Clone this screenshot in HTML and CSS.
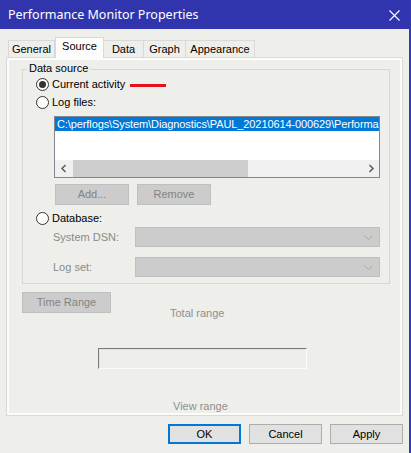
FILE: index.html
```html
<!DOCTYPE html>
<html>
<head>
<meta charset="utf-8">
<link rel="stylesheet" href="styles.css">
</head>
<body>
<div class="window">
  <div class="titlebar">
    <span class="title">Performance Monitor Properties</span>
    <svg class="close" width="11" height="11" viewBox="0 0 11 11"><path d="M0.5 0.5 L10.5 10.5 M10.5 0.5 L0.5 10.5" stroke="#fff" stroke-width="1.1" fill="none"/></svg>
  </div>
  <div class="body">
    <div class="tabs">
      <div class="tab t-general">General</div>
      <div class="tab t-source active">Source</div>
      <div class="tab t-data">Data</div>
      <div class="tab t-graph">Graph</div>
      <div class="tab t-appearance">Appearance</div>
    </div>
    <div class="panel">
      <div class="panel-inner">
        <div class="group">
          <span class="legend">Data source</span>
          <div class="radio-row first">
            <span class="radio checked"></span>
            <span class="rlabel">Current activity</span>
            <span class="redline"></span>
          </div>
          <div class="radio-row second">
            <span class="radio"></span>
            <span class="rlabel">Log files:</span>
          </div>
          <div class="listbox">
            <div class="item">C:\perflogs\System\Diagnostics\PAUL_20210614-000629\Performa</div>
            <div class="hscroll">
              <div class="arrow"><svg width="8" height="9" viewBox="0 0 8 9"><path d="M5.5 1 L2 4.5 L5.5 8" stroke="#606060" stroke-width="1.6" fill="none"/></svg></div>
              <div class="thumb"></div>
              <div class="track"></div>
              <div class="arrow"><svg width="8" height="9" viewBox="0 0 8 9"><path d="M2.5 1 L6 4.5 L2.5 8" stroke="#606060" stroke-width="1.6" fill="none"/></svg></div>
            </div>
          </div>
          <div class="btn-row">
            <div class="btn disabled small">Add...</div>
            <div class="btn disabled small">Remove</div>
          </div>
          <div class="radio-row third">
            <span class="radio"></span>
            <span class="rlabel">Database:</span>
          </div>
          <div class="field-row dsn">
            <span class="flabel">System DSN:</span>
            <div class="combo"><svg width="9" height="5" viewBox="0 0 9 5"><path d="M0.5 0.5 L4.5 4.5 L8.5 0.5" stroke="#a8a8a8" stroke-width="1" fill="none"/></svg></div>
          </div>
          <div class="field-row logset">
            <span class="flabel">Log set:</span>
            <div class="combo"><svg width="9" height="5" viewBox="0 0 9 5"><path d="M0.5 0.5 L4.5 4.5 L8.5 0.5" stroke="#a8a8a8" stroke-width="1" fill="none"/></svg></div>
          </div>
        </div>
        <div class="range-row">
          <div class="btn disabled timerange">Time Range</div>
          <span class="total-label">Total range</span>
        </div>
        <div class="slider"></div>
        <div class="view-label">View range</div>
      </div>
    </div>
    <div class="dialog-buttons">
      <div class="btn dlg default">OK</div>
      <div class="btn dlg">Cancel</div>
      <div class="btn dlg">Apply</div>
    </div>
  </div>
</div>
</body>
</html>
```
FILE: styles.css
```css
* { box-sizing: border-box; }
html, body { margin: 0; padding: 0; }
body {
  background: #eeeeea;
  font-family: "Liberation Sans", Arial, sans-serif;
  font-size: 11px;
  line-height: 13px;
  color: #000;
}
.window {
  width: 411px;
  height: 453px;
  border-right: 2px solid #3338b3;
  background: #eeeeea;
  overflow: hidden;
}
.titlebar {
  height: 29px;
  background: #3135ad;
  display: flex;
  align-items: center;
  padding-left: 8px;
  padding-right: 8px;
}
.title {
  font-family: "Noto Sans", "Open Sans", sans-serif;
  font-size: 12.5px;
  color: #fff;
  flex: 1;
  line-height: 16px;
  padding-top: 1px;
}
.close { margin-top: 1px; margin-right: 1px; }
.body { padding-top: 8px; }
.tabs {
  display: flex;
  align-items: flex-end;
  height: 21px;
  margin-left: 8px;
  margin-bottom: -1px;
}
.tab {
  height: 17px;
  margin-bottom: 1px;
  border: 1px solid #d9d9d9;
  border-bottom: none;
  background: #eeeeea;
  text-align: center;
  padding-top: 2px;
  white-space: nowrap;
}
.t-general { width: 47px; }
.t-source { width: 49px; }
.t-data { width: 40px; border-left: none; }
.t-graph { width: 42px; border-left: none; }
.t-appearance { width: 69px; border-left: none; }
.tab.active {
  height: 21px;
  margin-bottom: 0;
  background: #fcfcfb;
  position: relative;
  z-index: 1;
  border-color: #d9d9d9;
}
.panel {
  margin-left: 6px;
  width: 397px;
  height: 359px;
  border: 1px solid #d9d9d9;
  background: #fcfcfb;
  padding: 2px;
}
.panel-inner {
  height: 100%;
  background: #eeeeea;
  display: flex;
  flex-direction: column;
  align-items: flex-start;
}
.group {
  position: relative;
  margin-top: 9px;
  margin-left: 13px;
  width: 368px;
  border: 1px solid #d6d6d3;
  padding-top: 8px;
  padding-bottom: 6px;
}
.legend {
  position: absolute;
  top: -8px;
  left: 4px;
  padding: 0 2px;
  background: #eeeeea;
}
.radio-row {
  display: flex;
  align-items: center;
  height: 13px;
  margin-left: 13px;
}
.radio-row.second { margin-top: 5px; }
.radio-row.third { margin-top: 7px; }
.radio {
  width: 13px;
  height: 13px;
  border: 1px solid #333;
  border-radius: 50%;
  background: #fff;
  display: flex;
  align-items: center;
  justify-content: center;
  flex: none;
}
.radio.checked::after {
  content: "";
  width: 7px;
  height: 7px;
  border-radius: 50%;
  background: #333;
}
.rlabel { margin-left: 3px; }
.redline {
  width: 36px;
  height: 3px;
  background: #e8101c;
  margin-left: 5px;
  margin-top: 1px;
}
.listbox {
  margin-top: 7px;
  margin-left: 31px;
  width: 326px;
  height: 62px;
  border: 1px solid #828790;
  background: #fff;
  display: flex;
  flex-direction: column;
}
.item {
  height: 14px;
  line-height: 14px;
  background: #0078d7;
  color: #fff;
  padding-left: 2px;
  letter-spacing: -0.1px;
  white-space: nowrap;
  overflow: hidden;
}
.hscroll {
  margin-top: auto;
  height: 17px;
  display: flex;
  background: #f0f0f0;
}
.arrow {
  width: 17px;
  display: flex;
  align-items: center;
  justify-content: center;
}
.thumb {
  width: 175px;
  margin-left: 1px;
  background: #cdcdcd;
}
.track { flex: 1; }
.btn {
  display: flex;
  align-items: center;
  justify-content: center;
  white-space: nowrap;
}
.btn.disabled {
  background: #cccccc;
  border: 1px solid #bfbfbf;
  color: #838383;
}
.btn-row {
  display: flex;
  gap: 8px;
  margin-top: 6px;
  margin-left: 32px;
}
.btn.small { width: 74px; height: 21px; }
.field-row {
  display: flex;
  align-items: center;
  margin-left: 30px;
}
.field-row.dsn { margin-top: 2px; }
.field-row.logset { margin-top: 10px; }
.flabel { width: 82px; color: #8a8a8a; }
.combo {
  width: 245px;
  height: 20px;
  background: #cccccc;
  border: 1px solid #bfbfbf;
  display: flex;
  align-items: center;
  justify-content: flex-end;
  padding-right: 6px;
}
.range-row {
  display: flex;
  align-items: flex-start;
  margin-top: 8px;
  margin-left: 13px;
}
.btn.timerange { width: 89px; height: 21px; }
.total-label {
  margin-left: 59px;
  margin-top: 15px;
  color: #8f8f8f;
}
.slider {
  margin-top: 28px;
  margin-left: 89px;
  width: 209px;
  height: 21px;
  border-top: 1px solid #7a7a7a;
  border-left: 1px solid #7a7a7a;
  border-bottom: 1px solid #fcfcfb;
  border-right: 1px solid #fcfcfb;
  box-shadow: inset 1px 1px 0 #e3e3e3;
}
.view-label {
  margin-top: 31px;
  margin-left: 164px;
  color: #8f8f8f;
}
.dialog-buttons {
  display: flex;
  justify-content: flex-end;
  gap: 8px;
  margin-top: 8px;
  padding-right: 6px;
}
.btn.dlg {
  width: 73px;
  height: 20px;
  background: #e1e1e1;
  border: 1px solid #adadad;
}
.btn.dlg.default { border: 2px solid #0078d7; }
```
